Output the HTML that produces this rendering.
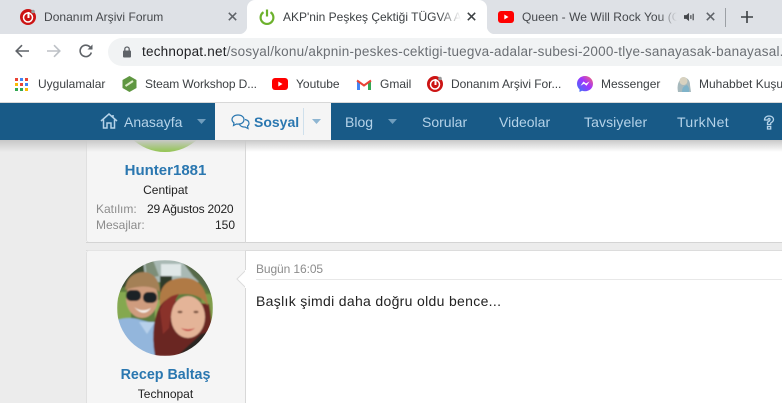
<!DOCTYPE html>
<html><head><meta charset="utf-8">
<style>
html,body{margin:0;padding:0}
body{width:782px;height:403px;overflow:hidden;position:relative;background:#ececec;font-family:"Liberation Sans",sans-serif}
.a{position:absolute}
.t{position:absolute;white-space:nowrap;line-height:16px}
svg{position:absolute;overflow:visible}
</style></head><body>

<!-- content -->
<div class="a" style="left:86px;top:140px;width:696px;height:102px;background:#fff;border-bottom:1px solid #d4d4d4"></div>
<div class="a" style="left:86px;top:140px;width:160px;background:#f5f5f5;border-right:1px solid #d8d8d8;border-bottom:1px solid #d4d4d4;border-left:1px solid #e0e0e0;box-sizing:border-box;height:103px;border-radius:0 0 0 3px"></div>
<div class="a" style="left:86px;top:250px;width:696px;height:153px;background:#fff;border-top:1px solid #dcdcdc;box-sizing:border-box"></div>
<div class="a" style="left:86px;top:250px;width:160px;height:153px;background:#f5f5f5;border-right:1px solid #d8d8d8;border-left:1px solid #e0e0e0;border-top:1px solid #e4e4e4;box-sizing:border-box;border-radius:3px 0 0 0"></div>

<!-- first avatar -->
<div class="a" style="left:117px;top:56px;width:96px;height:96px;border-radius:50%;background:#93c551"></div>
<div class="t" style="left:86px;width:159px;text-align:center;top:163px;font-size:15px;font-weight:bold;color:#2a77b0">Hunter1881</div>
<div class="t" style="left:86px;width:159px;text-align:center;top:182px;font-size:12px;color:#222">Centipat</div>
<div class="t" style="left:96px;top:201px;font-size:12px;color:#8c8c8c">Katılım:</div>
<div class="t" style="left:147px;top:201px;font-size:12px;letter-spacing:-.2px;color:#222">29 Ağustos 2020</div>
<div class="t" style="left:96px;top:217px;font-size:12px;color:#8c8c8c">Mesajlar:</div>
<div class="t" style="left:215px;top:217px;font-size:12px;color:#222">150</div>

<!-- second post -->
<svg style="left:117px;top:260px" width="96" height="96" viewBox="0 0 96 96">
<defs><clipPath id="c"><circle cx="48" cy="48" r="48"/></clipPath>
<filter id="b"><feGaussianBlur stdDeviation="0.8"/></filter></defs>
<g clip-path="url(#c)"><g filter="url(#b)">
<rect width="96" height="96" fill="#5d7d3c"/>
<rect width="96" height="22" fill="#a9b9b4"/>
<path d="M0 0H26L28 18L0 30Z" fill="#3b4b33"/>
<path d="M28 0H36L42 16L30 18Z" fill="#7d8e78"/>
<rect x="44" y="4" width="20" height="12" fill="#dfe7e7"/>
<path d="M64 0H96V36L76 16Z" fill="#56694a"/>
<rect x="43" y="16" width="12" height="16" fill="#2f3a2b"/>
<path d="M0 32H14V60H0Z" fill="#84a850"/>
<path d="M84 34H96V62H86Z" fill="#7f9c49"/>
<path d="M38 40H48V66H38Z" fill="#8fae58"/>
<path d="M0 60Q12 56 24 60L40 64L44 96H0Z" fill="#93b6dc"/>
<path d="M22 62L38 62L30 74Z" fill="#b7d0ea"/>
<ellipse cx="25" cy="38" rx="16" ry="20" fill="#cf9c7e"/>
<path d="M8 30Q10 12 28 12Q42 14 43 32Q32 22 8 30Z" fill="#a48057"/>
<rect x="9" y="30" width="15" height="11" rx="5" fill="#1d2426"/>
<rect x="26" y="32" width="14" height="11" rx="5" fill="#1d2426"/>
<path d="M17 47Q25 53 34 48Q27 58 17 47Z" fill="#f6f0ea"/>
<path d="M38 96Q32 62 46 40L92 44Q98 76 92 96Z" fill="#6b2624"/>
<path d="M60 96L84 74L96 70V96Z" fill="#2a2623"/>
<ellipse cx="71" cy="57" rx="17" ry="21" fill="#e4b498"/>
<path d="M43 46Q40 20 64 18Q88 16 91 46Q84 34 68 34Q52 34 43 46Z" fill="#b07a45"/>
<path d="M43 50Q48 36 62 34Q54 46 52 68L46 74Z" fill="#8a302c"/>
<path d="M64 68Q71 71 78 68Q71 74 64 68Z" fill="#c22f36"/>
<ellipse cx="63" cy="52" rx="2.500" ry="1.200" fill="#7a5240"/><ellipse cx="79" cy="52" rx="2.500" ry="1.200" fill="#7a5240"/>
</g></g></svg>
<svg style="left:236px;top:270px" width="12" height="20"><path d="M10 0L1 9L10 18" fill="#fff" stroke="#dcdcdc"/><path d="M10 0V18" stroke="#fff" stroke-width="2"/></svg>
<div class="t" style="left:86px;width:159px;text-align:center;top:367px;font-size:14.300px;font-weight:bold;color:#2a77b0">Recep Baltaş</div>
<div class="t" style="left:86px;width:159px;text-align:center;top:386px;font-size:12px;color:#222">Technopat</div>
<div class="t" style="left:256px;top:261px;font-size:12px;letter-spacing:-.1px;color:#8c8c8c">Bugün 16:05</div>
<div class="a" style="left:256px;top:279px;width:526px;height:1px;background:#e8e8e8"></div>
<div class="t" style="left:256px;top:293px;font-size:14px;color:#222;letter-spacing:.32px">Başlık şimdi daha doğru oldu bence...</div>

<!-- shadow + nav -->
<div class="a" style="left:0;top:140px;width:782px;height:12px;background:linear-gradient(#c8c8c8,rgba(236,236,236,0))"></div>
<div class="a" style="left:0;top:103px;width:782px;height:37px;background:#185a87"></div>
<div class="a" style="left:215px;top:103px;width:116px;height:37px;background:#f5f5f5"></div>
<div class="a" style="left:303px;top:108px;width:1px;height:27px;background:#cfe0ec"></div>

<svg style="left:100px;top:113px" width="18" height="16" viewBox="0 0 18 16" fill="none" stroke="#b5d3e9" stroke-width="1.500"><path d="M1 8L9 1L17 8M3.500 6.500V15H7V10H11V15H14.500V6.500M13 2V4.500"/></svg>
<div class="t" style="left:124px;top:114px;font-size:14px;color:#b5d3e9">Anasayfa</div>
<svg style="left:197px;top:119px" width="9" height="5"><path d="M0 0H9L4.500 5Z" fill="#6f9dbd"/></svg>

<svg style="left:231px;top:114px" width="19" height="16" viewBox="0 0 19 16" fill="none" stroke="#2a77b0" stroke-width="1.200"><path d="M7 1C3.500 1 1 3 1 5.500C1 7 2 8.200 3 9L2.500 11.500L5.500 10C6 10.100 7 10.200 8 10C11 10 13 8 13 5.500C13 3 10.500 1 7 1Z"/><path d="M14 5.500C16.500 6 18 7.500 18 9.300C18 10.500 17.300 11.500 16.500 12L17 14.500L14 13C12 13.300 9.500 12.500 8.500 10.500"/></svg>
<div class="t" style="left:254px;top:114px;font-size:14px;font-weight:bold;color:#2a77b0">Sosyal</div>
<svg style="left:312px;top:119px" width="9" height="5"><path d="M0 0H9L4.500 5Z" fill="#8fb6d2"/></svg>

<div class="t" style="left:345px;top:114px;font-size:14px;color:#b5d3e9">Blog</div>
<svg style="left:388px;top:119px" width="9" height="5"><path d="M0 0H9L4.500 5Z" fill="#6f9dbd"/></svg>
<div class="t" style="left:422px;top:114px;font-size:14px;color:#b5d3e9">Sorular</div>
<div class="t" style="left:499px;top:114px;font-size:14px;color:#b5d3e9">Videolar</div>
<div class="t" style="left:584px;top:114px;font-size:14px;color:#b5d3e9;letter-spacing:.1px">Tavsiyeler</div>
<div class="t" style="left:677px;top:114px;font-size:14px;color:#b5d3e9;letter-spacing:.4px">TurkNet</div>
<svg style="left:763px;top:115px" width="12" height="15" viewBox="0 0 12 15" fill="none" stroke="#b5d3e9" stroke-width="1.300"><path d="M1.500 5C1.500 2.500 3.500 1 6 1C8.700 1 10.500 2.600 10.500 4.600C10.500 6.200 9.300 7 7.700 8V9.500H4.500V7.200C5.500 6.500 7 6 7 4.600C7 3.800 6.600 3.400 6 3.400C5.300 3.400 5 4 5 5Z"/><path d="M4.500 11.500H7.700V14H4.500Z"/></svg>

<!-- chrome -->
<div class="a" style="left:0;top:0;width:782px;height:34px;background:#dee1e6"></div>
<div class="a" style="left:247px;top:0;width:240px;height:34px;background:#fff;border-radius:8px 8px 0 0"></div>
<div class="a" style="left:0;top:34px;width:782px;height:68px;background:#fff"></div>
<div class="a" style="left:239px;top:26px;width:8px;height:8px;background:radial-gradient(circle at 0 0,#dee1e6 8px,#fff 8.500px)"></div>
<div class="a" style="left:487px;top:26px;width:8px;height:8px;background:radial-gradient(circle at 100% 0,#dee1e6 8px,#fff 8.500px)"></div>
<div class="a" style="left:0;top:102px;width:782px;height:1px;background:#d8d8d8"></div>

<!-- tabs -->
<svg style="left:20px;top:9px" width="16" height="16" viewBox="0 0 16 16"><circle cx="8" cy="8" r="8" fill="#cc1414"/><circle cx="8" cy="8.500" r="4.500" fill="none" stroke="#fff" stroke-width="1.500"/><path d="M8.500 3V9" stroke="#fff" stroke-width="2"/><circle cx="13" cy="2.500" r="1.800" fill="#999"/></svg>
<div class="t" style="left:44px;top:9px;font-size:12px;color:#45484c;letter-spacing:.03px">Donanım Arşivi Forum</div>
<svg style="left:228px;top:12px" width="9" height="9" viewBox="0 0 9 9"><path d="M.8.800L8.200 8.200M8.200.800L.8 8.200" stroke="#5f6368" stroke-width="1.500"/></svg>

<svg style="left:259px;top:9px" width="16" height="16" viewBox="0 0 16 16" fill="none" stroke="#6cb12c" stroke-width="2.200"><path d="M4.500 3.200A6.400 6.400 0 1 0 11.500 3.200"/><path d="M8 .5V7.500"/></svg>
<div class="a" style="overflow:hidden;left:283px;top:9px;width:178px;height:16px"><div class="t" style="left:0;top:0;font-size:12px;color:#3c4043">AKP'nin Peşkeş Çektiği TÜGVA Adalar</div><div class="a" style="right:0;top:0;width:22px;height:16px;background:linear-gradient(90deg,rgba(255,255,255,0),#fff)"></div></div>
<svg style="left:467px;top:12px" width="9" height="9" viewBox="0 0 9 9"><path d="M.8.800L8.200 8.200M8.200.800L.8 8.200" stroke="#3c4043" stroke-width="1.500"/></svg>

<svg style="left:498px;top:11px" width="16" height="12" viewBox="0 0 16 12"><rect width="16" height="12" rx="3" fill="#f00"/><path d="M6.300 3.500V8.500L10.500 6Z" fill="#fff"/></svg>
<div class="a" style="overflow:hidden;left:522px;top:9px;width:155px;height:16px"><div class="t" style="left:0;top:0;font-size:12px;color:#45484c;letter-spacing:.05px">Queen - We Will Rock You (Official</div><div class="a" style="right:0;top:0;width:18px;height:16px;background:linear-gradient(90deg,rgba(222,225,230,0),#dee1e6)"></div></div>
<svg style="left:684px;top:12px" width="11" height="10" viewBox="0 0 12 10"><path d="M0 3H2.500L5.500 .5V9.500L2.500 7H0Z" fill="#45484c"/><path d="M7.500 3V7M10 1.500V8.500" stroke="#45484c" stroke-width="1.300"/></svg>
<svg style="left:706px;top:12px" width="9" height="9" viewBox="0 0 9 9"><path d="M.8.800L8.200 8.200M8.200.800L.8 8.200" stroke="#5f6368" stroke-width="1.500"/></svg>
<div class="a" style="left:725px;top:8px;width:1px;height:19px;background:#9ca0a5"></div>
<svg style="left:741px;top:11px" width="12" height="12"><path d="M6 0V12M0 6H12" stroke="#3c4043" stroke-width="1.600"/></svg>

<!-- toolbar -->
<svg style="left:15px;top:44px" width="14" height="14" viewBox="0 0 14 14" fill="none" stroke="#5f6368" stroke-width="1.600"><path d="M14 7H1.500M7 1.200L1.200 7L7 12.800"/></svg>
<svg style="left:47px;top:44px" width="14" height="14" viewBox="0 0 14 14" fill="none" stroke="#bdc1c6" stroke-width="1.600"><path d="M0 7H12.500M7 1.200L12.800 7L7 12.800"/></svg>
<svg style="left:79px;top:44px" width="14" height="14" viewBox="0 0 14 14" fill="none" stroke="#5f6368" stroke-width="1.600"><path d="M12.300 8.500A5.700 5.700 0 1 1 10.800 2.800L13 5"/><path d="M13.500 .5V5.500H8.500Z" fill="#5f6368" stroke="none"/></svg>
<div class="a" style="left:108px;top:38px;width:700px;height:28px;background:#f1f3f4;border-radius:14px"></div>
<svg style="left:122px;top:46px" width="10" height="12" viewBox="0 0 10 12"><rect x="1" y="4.500" width="8" height="7" rx="1" fill="#5f6368"/><path d="M2.800 5V3.200A2.200 2.200 0 0 1 7.200 3.200V5" fill="none" stroke="#5f6368" stroke-width="1.300"/></svg>
<div class="t" style="left:142px;top:44px;font-size:13.500px;letter-spacing:.22px;color:#6b6f74"><span style="color:#202124">technopat.net</span>/sosyal/konu/akpnin-peskes-cektigi-tuegva-adalar-subesi-2000-tlye-sanayasak-banayasal.</div>

<!-- bookmarks -->
<svg style="left:15px;top:78px" width="13" height="13" viewBox="0 0 13 13"><g><rect width="3" height="3" fill="#ea4335"/><rect x="5" width="3" height="3" fill="#4285f4"/><rect x="10" width="3" height="3" fill="#ea4335"/><rect y="5" width="3" height="3" fill="#fbbc05"/><rect x="5" y="5" width="3" height="3" fill="#ea4335"/><rect x="10" y="5" width="3" height="3" fill="#4285f4"/><rect y="10" width="3" height="3" fill="#34a853"/><rect x="5" y="10" width="3" height="3" fill="#34a853"/><rect x="10" y="10" width="3" height="3" fill="#fbbc05"/></g></svg>
<div class="t" style="left:38px;top:76px;font-size:12px;color:#3c4043">Uygulamalar</div>
<svg style="left:122px;top:76px" width="15" height="16" viewBox="0 0 15 16"><path d="M7.500 0L14.500 4V12L7.500 16L.5 12V4Z" fill="#5f9741"/><path d="M3.500 10L11 5" stroke="#dcebc8" stroke-width="2"/></svg>
<div class="t" style="left:145px;top:76px;font-size:12px;color:#3c4043;letter-spacing:-.1px">Steam Workshop D...</div>
<svg style="left:272px;top:78px" width="16" height="12" viewBox="0 0 16 12"><rect width="16" height="12" rx="3" fill="#f00"/><path d="M6.300 3.500V8.500L10.500 6Z" fill="#fff"/></svg>
<div class="t" style="left:296px;top:76px;font-size:12px;color:#3c4043">Youtube</div>
<svg style="left:357px;top:79px" width="14" height="11" viewBox="0 0 14 11"><path d="M0 1.500V11H3V4Z" fill="#4285f4"/><path d="M14 1.500V11H11V4Z" fill="#34a853"/><path d="M0 1.500L7 6.500L14 1.500" fill="none" stroke="#ea4335" stroke-width="2"/></svg>
<div class="t" style="left:380px;top:76px;font-size:12px;color:#3c4043">Gmail</div>
<svg style="left:427px;top:76px" width="16" height="16" viewBox="0 0 16 16"><circle cx="8" cy="8" r="8" fill="#cc1414"/><circle cx="8" cy="8.500" r="4.500" fill="none" stroke="#fff" stroke-width="1.500"/><path d="M8.500 3V9" stroke="#fff" stroke-width="2"/><circle cx="13" cy="2.500" r="1.800" fill="#999"/></svg>
<div class="t" style="left:451px;top:76px;font-size:12px;color:#3c4043;letter-spacing:-.05px">Donanım Arşivi For...</div>
<svg style="left:577px;top:76px" width="16" height="16" viewBox="0 0 16 16"><defs><linearGradient id="m" x1="0" y1="1" x2="1" y2="0"><stop offset="0" stop-color="#2f7cf6"/><stop offset=".55" stop-color="#a033ff"/><stop offset="1" stop-color="#ff6a68"/></linearGradient></defs><path d="M8 0C3.500 0 0 3.300 0 7.700C0 10 1 12 2.500 13.300V16L5 14.700C6 15 7 15.200 8 15.200C12.500 15.200 16 12 16 7.700S12.500 0 8 0Z" fill="url(#m)"/><path d="M3.500 9.700L6.500 5.500L9 7.500L12.500 5.500L9.500 9.700L7 7.800Z" fill="#fff"/></svg>
<div class="t" style="left:601px;top:76px;font-size:12px;color:#3c4043">Messenger</div>
<svg style="left:675px;top:76px" width="17" height="16" viewBox="0 0 17 16"><path d="M3 16Q1 6 8 1Q15 2 15 9L16 16Z" fill="#a7b9bd"/><circle cx="8.500" cy="5" r="4" fill="#d8d2c0"/><path d="M7 16Q7 10 12 9Q15 12 14 16Z" fill="#7fb3c9"/></svg>
<div class="t" style="left:699px;top:76px;font-size:12px;color:#3c4043">Muhabbet Kuşu</div>

</body></html>
